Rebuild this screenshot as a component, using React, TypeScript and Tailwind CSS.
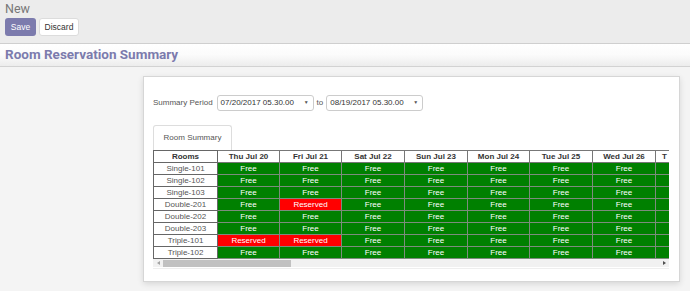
import React from "react";

const days = [
  "Thu Jul 20",
  "Fri Jul 21",
  "Sat Jul 22",
  "Sun Jul 23",
  "Mon Jul 24",
  "Tue Jul 25",
  "Wed Jul 26",
  "Thu Jul 27",
];
const widths = [62, 62, 63, 63, 62, 63, 63, 14];

const rooms: { name: string; res: number[] }[] = [
  { name: "Single-101", res: [] },
  { name: "Single-102", res: [] },
  { name: "Single-103", res: [] },
  { name: "Double-201", res: [1] },
  { name: "Double-202", res: [] },
  { name: "Double-203", res: [] },
  { name: "Triple-101", res: [0, 1] },
  { name: "Triple-102", res: [] },
];

export default function App() {
  return (
    <div
      className="w-[690px] h-[291px] overflow-hidden bg-[#f4f4f4] flex flex-col"
      style={{ fontFamily: '"Liberation Sans", Arial, sans-serif' }}
    >
      {/* control panel */}
      <div className="h-[44px] bg-[#ececec] border-b border-[#cfcfcf] px-[5px] flex flex-col">
        <div
          className="text-[12.5px] leading-[15px] text-[#777777] pt-[1px]"
          style={{ fontFamily: "Roboto, sans-serif" }}
        >
          New
        </div>
        <div className="flex gap-[3px] mt-[2px]">
          <button className="w-[31px] h-[18px] rounded-[3px] bg-[#7c7bad] text-white text-[8.5px] leading-[18px]">
            Save
          </button>
          <button className="w-[40px] h-[18px] rounded-[3px] bg-white border border-[#dcdcdc] text-[#333] text-[8.5px] leading-[16px]">
            Discard
          </button>
        </div>
      </div>
      {/* title band */}
      <div className="h-[23px] bg-gradient-to-b from-[#ffffff] via-[#fbfbfb] to-[#ececec] border-b border-[#d2d2d2] px-[5px] flex items-center">
        <div
          className="text-[13.5px] font-bold text-[#7c7bad] leading-[18px] -mt-[2px]"
          style={{ fontFamily: "Roboto, sans-serif" }}
        >
          Room Reservation Summary
        </div>
      </div>
      {/* sheet */}
      <div className="ml-[143px] mt-[9px] w-[537px] h-[206px] bg-white border border-[#d6d6d6] shadow-[0_2px_6px_rgba(0,0,0,0.12)] pl-[9px] pt-[18px]">
        <div className="flex items-center h-[15px] text-[8px] text-[#555]">
          <span className="mr-[4px]">Summary Period</span>
          <div className="w-[97px] h-[16px] border border-[#cccccc] rounded-[3px] flex items-center pl-[3px] pr-[4px] text-[#333]">
            <span className="flex-1">07/20/2017 05.30.00</span>
            <span className="text-[5px] text-[#555]">▼</span>
          </div>
          <span className="mx-[3px]">to</span>
          <div className="w-[97px] h-[16px] border border-[#cccccc] rounded-[3px] flex items-center pl-[3px] pr-[4px] text-[#333]">
            <span className="flex-1">08/19/2017 05.30.00</span>
            <span className="text-[5px] text-[#555]">▼</span>
          </div>
        </div>
        <div className="mt-[15px] flex">
          <div className="w-[79px] h-[25px] border border-b-0 border-[#dddddd] rounded-t-[3px] flex items-center justify-center text-[8px] text-[#555]">
            Room Summary
          </div>
        </div>
        <div className="w-[516px] overflow-hidden">
          <table className="border-collapse text-[8px] leading-[10px] table-fixed w-[516px]">
            <thead>
              <tr className="h-[12px]">
                <th className="w-[64px] border border-[#666] bg-white text-[#333] font-bold p-0">Rooms</th>
                {days.map((d, i) => (
                  <th
                    key={d}
                    className="border border-[#777] bg-white text-[#333] font-bold p-0 overflow-hidden whitespace-nowrap"
                    style={{ width: widths[i] }}
                  >
                    {i === 7 ? <span className="block text-left pl-[6px]">T</span> : d}
                  </th>
                ))}
              </tr>
            </thead>
            <tbody>
              {rooms.map((r) => (
                <tr key={r.name} className="h-[12px]">
                  <td className="border border-[#666] bg-white text-[#555] text-center p-0">{r.name}</td>
                  {days.map((d, i) =>
                    i === 7 ? (
                      <td key={d} className="border border-[#7d8c7d] border-r-0 bg-[#008000] p-0" />
                    ) : r.res.includes(i) ? (
                      <td key={d} className="border border-[#7d8c7d] bg-[#ff0000] text-white text-center p-0">
                        Reserved
                      </td>
                    ) : (
                      <td key={d} className="border border-[#7d8c7d] bg-[#008000] text-white text-center p-0">
                        Free
                      </td>
                    )
                  )}
                </tr>
              ))}
            </tbody>
          </table>
        </div>
        {/* scrollbar */}
        <div className="w-[516px] h-[8px] bg-[#f1f1f1] flex items-center">
          <div className="w-[10px] flex justify-center">
            <div className="w-0 h-0 border-y-[2px] border-y-transparent border-r-[3px] border-r-[#a3a3a3]" />
          </div>
          <div className="w-[128px] h-[7px] bg-[#c1c1c1]" />
          <div className="flex-1" />
          <div className="w-[10px] flex justify-center">
            <div className="w-0 h-0 border-y-[2px] border-y-transparent border-l-[3px] border-l-[#505050]" />
          </div>
        </div>
        <div className="w-[516px] h-[2px] border-b border-[#eeeeee]" />
      </div>
    </div>
  );
}
